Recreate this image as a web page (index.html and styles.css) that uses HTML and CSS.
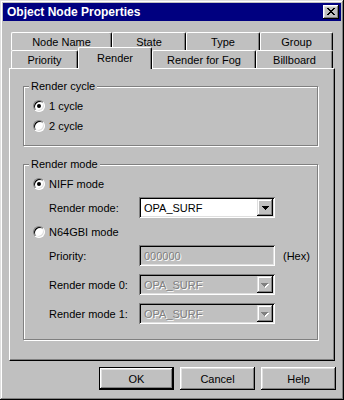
FILE: index.html
```html
<!DOCTYPE html>
<html lang="en">
<head>
<meta charset="UTF-8" />
<meta name="viewport" content="width=device-width, initial-scale=1" />
<title>Object Node Properties</title>
<link rel="stylesheet" href="styles.css">
</head>
<body>
  <div class="window">
    <div class="titlebar">
      <span class="title">Object Node Properties</span>
      <button class="close" type="button" aria-label="Close">
        <svg width="8" height="7" viewBox="0 0 8 7" shape-rendering="crispEdges">
          <path d="M0 0h2v1H0zM6 0h2v1H6zM1 1h2v1H1zM5 1h2v1H5zM2 2h4v1H2zM3 3h2v1H3zM2 4h4v1H2zM1 5h2v1H1zM5 5h2v1H5zM0 6h2v1H0zM6 6h2v1H6z" fill="#000"/>
        </svg>
      </button>
    </div>

    <div class="tabs">
      <div class="tabrow">
        <div class="tab tab-name">Node Name</div>
        <div class="tab tab-state">State</div>
        <div class="tab tab-type">Type</div>
        <div class="tab tab-group">Group</div>
      </div>
      <div class="tabrow">
        <div class="tab tab-priority">Priority</div>
        <div class="tab tab-render active">Render</div>
        <div class="tab tab-fog">Render for Fog</div>
        <div class="tab tab-billboard">Billboard</div>
      </div>

      <div class="panel">
        <div class="group cycle">
          <div class="legend">Render cycle</div>
          <div class="options">
            <div class="radiorow"><span class="radio checked"></span>1 cycle</div>
            <div class="radiorow"><span class="radio"></span>2 cycle</div>
          </div>
        </div>

        <div class="group mode">
          <div class="legend">Render mode</div>
          <div class="options">
            <div class="radiorow"><span class="radio checked"></span>NIFF mode</div>
            <div class="field niff">
              <label>Render mode:</label>
              <div class="combo">
                <span class="value">OPA_SURF</span>
                <span class="dropbtn">
                  <svg width="7" height="4" viewBox="0 0 7 4" shape-rendering="crispEdges"><path d="M0 0h7v1H6v1H5v1H4v1H3V3H2V2H1V1H0z" fill="#000"/></svg>
                </span>
              </div>
            </div>
            <div class="radiorow gbi"><span class="radio"></span>N64GBI mode</div>
            <div class="field prio">
              <label>Priority:</label>
              <div class="combo disabled"><span class="value">000000</span></div>
              <span class="hex">(Hex)</span>
            </div>
            <div class="field sub">
              <label>Render mode 0:</label>
              <div class="combo disabled">
                <span class="value">OPA_SURF</span>
                <span class="dropbtn">
                  <svg width="8" height="5" viewBox="0 0 8 5" shape-rendering="crispEdges"><path d="M1 1h7v1H7v1H6v1H5v1H4V4H3V3H2V2H1z" fill="#fff"/><path d="M0 0h7v1H6v1H5v1H4v1H3V3H2V2H1V1H0z" fill="#808080"/></svg>
                </span>
              </div>
            </div>
            <div class="field sub">
              <label>Render mode 1:</label>
              <div class="combo disabled">
                <span class="value">OPA_SURF</span>
                <span class="dropbtn">
                  <svg width="8" height="5" viewBox="0 0 8 5" shape-rendering="crispEdges"><path d="M1 1h7v1H7v1H6v1H5v1H4V4H3V3H2V2H1z" fill="#fff"/><path d="M0 0h7v1H6v1H5v1H4v1H3V3H2V2H1V1H0z" fill="#808080"/></svg>
                </span>
              </div>
            </div>
          </div>
        </div>
      </div>
    </div>

    <div class="buttons">
      <button class="btn default" type="button">OK</button>
      <button class="btn" type="button">Cancel</button>
      <button class="btn" type="button">Help</button>
    </div>
  </div>
</body>
</html>
```

FILE: styles.css
```css
body {
  margin: 0;
  font-family: "Liberation Sans", Arial, sans-serif;
  font-size: 11px;
  color: #000;
}
.window {
  width: 344px;
  height: 400px;
  box-sizing: border-box;
  padding: 3px;
  background: #c0c0c0;
  box-shadow: inset -1px -1px #000, inset 1px 1px #dfdfdf,
              inset -2px -2px #808080, inset 2px 2px #fff;
}
.titlebar {
  height: 18px;
  background: #000080;
  color: #fff;
  display: flex;
  align-items: center;
  justify-content: space-between;
  padding: 0 2px 0 4px;
}
.title {
  font-weight: bold;
  font-size: 12px;
}
.close {
  width: 16px;
  height: 14px;
  padding: 0 0 1px 0;
  border: 0;
  background: #c0c0c0;
  box-shadow: inset -1px -1px #000, inset 1px 1px #fff,
              inset -2px -2px #808080, inset 2px 2px #dfdfdf;
  display: flex;
  align-items: center;
  justify-content: center;
}

/* tab strip */
.tabs {
  margin: 11px 6px 0;
}
.tabrow {
  display: flex;
  height: 18px;
  padding-left: 2px;
}
.tab {
  box-sizing: border-box;
  height: 18px;
  border: 1px solid #fff;
  border-right-color: #000;
  border-bottom: 0;
  border-radius: 2px 2px 0 0;
  box-shadow: inset -1px 0 #808080;
  background: #c0c0c0;
  display: flex;
  align-items: center;
  justify-content: center;
}
.tab.active {
  height: 22px;
  margin-top: -3px;
  padding-bottom: 2px;
  position: relative;
  z-index: 1;
}
.tab-name { width: 101px; }
.tab-state { width: 74px; }
.tab-type { width: 74px; }
.tab-group { width: 73px; }
.tab-priority { width: 67px; }
.tab-render { width: 74px; }
.tab-fog { width: 104px; }
.tab-billboard { width: 77px; }

.panel {
  height: 293px;
  box-sizing: border-box;
  border: 1px solid;
  border-color: #fff #000 #000 #fff;
  box-shadow: inset -1px -1px #808080;
  padding: 17px 0 0 13px;
}

/* group boxes */
.group {
  width: 295px;
  box-sizing: border-box;
  border: 1px solid #808080;
  box-shadow: inset 1px 1px #fff, 1px 1px #fff;
}
.group.cycle {
  padding-bottom: 9px;
}
.group.mode {
  margin-top: 18px;
  padding-bottom: 15px;
}
.legend {
  display: table;
  margin: -7px 0 0 5px;
  padding: 0 2px;
  line-height: 13px;
  background: #c0c0c0;
}
.options {
  padding-top: 3px;
}
.radiorow {
  display: flex;
  align-items: center;
  height: 20px;
  padding-left: 9px;
}
.radiorow.gbi {
  margin-top: 4px;
}
.radio {
  width: 12px;
  height: 12px;
  box-sizing: border-box;
  margin-right: 4px;
  border: 1px solid;
  border-color: #808080 #fff #fff #808080;
  border-radius: 50%;
  background: #fff;
  box-shadow: inset 1px 1px #000, inset -1px -1px #dfdfdf;
  position: relative;
}
.radio.checked::after {
  content: "";
  position: absolute;
  left: 3px;
  top: 3px;
  width: 4px;
  height: 4px;
  border-radius: 50%;
  background: #000;
}

/* fields */
.field {
  display: flex;
  align-items: center;
  height: 21px;
  padding-left: 25px;
}
.field.niff { margin-top: 3px; }
.field.prio { margin-top: 3px; }
.field.sub { margin-top: 8px; }
.field label {
  width: 90px;
}
.combo {
  width: 136px;
  height: 21px;
  box-sizing: border-box;
  padding: 2px;
  display: flex;
  align-items: center;
  background: #fff;
  box-shadow: inset 1px 1px #808080, inset -1px -1px #fff,
              inset 2px 2px #000, inset -2px -2px #dfdfdf;
}
.combo .value {
  flex: 1;
  padding-left: 3px;
}
.combo.disabled {
  background: #c0c0c0;
  color: #808080;
}
.combo.disabled .value {
  text-shadow: 1px 1px #fff;
}
.dropbtn {
  width: 16px;
  height: 17px;
  box-sizing: border-box;
  padding-top: 1px;
  display: flex;
  align-items: center;
  justify-content: center;
  background: #c0c0c0;
  box-shadow: inset -1px -1px #000, inset 1px 1px #dfdfdf,
              inset -2px -2px #808080, inset 2px 2px #fff;
}
.hex {
  margin-left: 8px;
}

/* dialog buttons */
.buttons {
  display: flex;
  justify-content: flex-end;
  gap: 6px;
  margin-top: 6px;
  padding-right: 5px;
}
.btn {
  width: 75px;
  height: 23px;
  box-sizing: border-box;
  padding: 0;
  border: 0;
  background: #c0c0c0;
  font: inherit;
  color: #000;
  box-shadow: inset -1px -1px #000, inset 1px 1px #fff,
              inset -2px -2px #808080, inset 2px 2px #dfdfdf;
}
.btn.default {
  border: 1px solid #000;
}
```
